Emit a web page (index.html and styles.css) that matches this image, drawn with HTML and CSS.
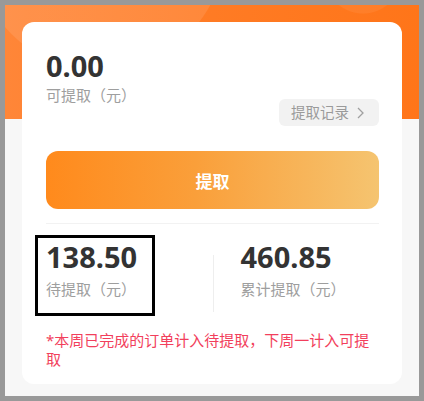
FILE: index.html
```html
<!DOCTYPE html>
<html lang="zh-CN">
<head>
<meta charset="utf-8">
<link rel="stylesheet" href="styles.css">
</head>
<body>
<div class="frame">
  <div class="page">
    <div class="card">
      <div class="top">
        <div class="balance">
          <div class="amount">0.00</div>
          <div class="label">可提取（元）</div>
        </div>
        <div class="records">提取记录<svg class="chev" width="7" height="12" viewBox="0 0 7 12"><polyline points="1,1 6,6 1,11" fill="none" stroke="#a0a0a0" stroke-width="1.3"/></svg></div>
      </div>
      <div class="withdraw">提取</div>
      <div class="divider"></div>
      <div class="stats">
        <div class="col">
          <div class="stat highlight">
            <div class="amount">138.50</div>
            <div class="label">待提取（元）</div>
          </div>
        </div>
        <div class="col col-right">
          <div class="stat">
            <div class="amount">460.85</div>
            <div class="label">累计提取（元）</div>
          </div>
        </div>
      </div>
      <div class="note">*本周已完成的订单计入待提取，下周一计入可提取</div>
    </div>
  </div>
</div>
</body>
</html>
```
FILE: styles.css
```css
html, body {
  margin: 0;
  padding: 0;
}
body {
  background: #999999;
  font-family: "Noto Sans", "Noto Sans CJK SC", sans-serif;
  width: 424px;
  height: 401px;
  overflow: hidden;
}
.frame {
  padding: 5px 5px 5px 5px;
}
.page {
  width: 414px;
  height: 391px;
  box-sizing: border-box;
  padding: 17px 17px 12px 17px;
  background:
    radial-gradient(circle at 95px -60px, rgba(255,255,255,0.1) 0 125px, transparent 126px) top left / 100% 114px no-repeat,
    radial-gradient(circle at 358px -30px, rgba(255,255,255,0.06) 0 38px, transparent 39px) top left / 100% 114px no-repeat,
    linear-gradient(90deg, #ff8638 0%, #ff7b24 50%, #ff7519 100%) top left / 100% 114px no-repeat,
    #f7f7f7;
}
.card {
  background: #fff;
  border-radius: 12px;
  height: 362px;
  box-sizing: border-box;
  padding: 27px 23px 0 24px;
}
.top {
  height: 77px;
  display: flex;
  justify-content: space-between;
  align-items: flex-start;
}
.amount {
  font-size: 29px;
  line-height: 34px;
  font-weight: 700;
  color: #333;
}
.label {
  margin-top: 2px;
  font-size: 15px;
  line-height: 20px;
  color: #9e9e9e;
}
.records {
  align-self: flex-end;
  width: 100px;
  height: 27px;
  box-sizing: border-box;
  border-radius: 6px;
  background: #f2f2f2;
  color: #9a9a9a;
  font-size: 14.5px;
  line-height: 27px;
  padding-left: 12px;
  display: flex;
  align-items: center;
  gap: 8px;
}
.chev {
  display: block;
}
.withdraw {
  margin-top: 25px;
  height: 58px;
  border-radius: 12px;
  background: linear-gradient(90deg, #ff8a1c 0%, #fa9f3a 45%, #f5c470 100%);
  color: #fff;
  font-size: 17px;
  font-weight: 700;
  display: flex;
  align-items: center;
  justify-content: center;
}
.divider {
  margin-top: 14px;
  height: 1px;
  background: #f2f2f2;
}
.stats {
  display: grid;
  grid-template-columns: 1fr 1fr;
  padding: 16px 0 15px;
}
.col-right {
  border-left: 1px solid #eeeeee;
  padding-left: 27px;
  margin-top: 15px;
  margin-bottom: -13px;
}
.col-right .stat {
  margin-top: -15px;
}
.stat {
  position: relative;
}
.stat .label {
  margin-top: 5px;
}
.highlight::after {
  content: "";
  position: absolute;
  left: -11px;
  top: -5px;
  width: 120px;
  height: 81px;
  border: 3px solid #000;
  box-sizing: border-box;
}
.note {
  margin-top: 17px;
  font-size: 15px;
  line-height: 19px;
  color: #f23f5c;
}
```
